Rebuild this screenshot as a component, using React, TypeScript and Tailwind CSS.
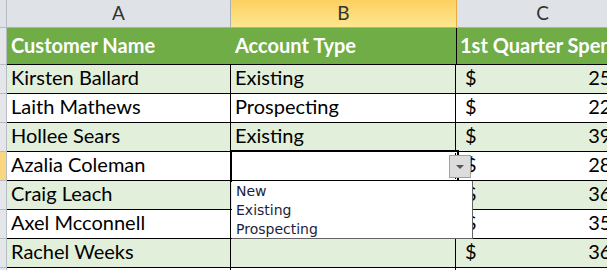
import React from 'react';

interface Row {
  name: string;
  type: string;
  spend: string;
}

const rows: Row[] = [
  { name: 'Kirsten Ballard', type: 'Existing', spend: '250' },
  { name: 'Laith Mathews', type: 'Prospecting', spend: '225' },
  { name: 'Hollee Sears', type: 'Existing', spend: '390' },
  { name: 'Azalia Coleman', type: '', spend: '285' },
  { name: 'Craig Leach', type: '', spend: '360' },
  { name: 'Axel Mcconnell', type: '', spend: '355' },
  { name: 'Rachel Weeks', type: '', spend: '365' },
  { name: '', type: '', spend: '' },
];

const font = { fontFamily: 'Lato, "Open Sans", sans-serif' };

const App: React.FC = () => {
  return (
    <div className="relative w-[607px] h-[270px] overflow-hidden bg-white text-black" style={font}>
      {/* Column headers */}
      <div className="flex h-[28px]">
        <div className="w-[7px] shrink-0 bg-[#dfe3e8] border-r border-b border-[#b7bcc4]" />
        <div className="w-[224px] shrink-0 flex items-center justify-center bg-[#dfe3e8] border-r border-b border-[#aab0b8] text-[19px] text-[#333]">A</div>
        <div className="w-[226px] shrink-0 flex items-center justify-center bg-gradient-to-b from-[#fcd05f] to-[#fde78f] border-r border-b border-[#e9a93f] text-[19px] text-[#333]">B</div>
        <div className="w-[171px] shrink-0 flex items-center justify-center bg-[#dfe3e8] border-b border-[#aab0b8] text-[19px] text-[#333]">C</div>
      </div>

      {/* Table header */}
      <div className="flex h-[36px]">
        <div className="w-[7px] shrink-0 bg-[#e4e6ea] border-r border-[#b7bcc4]" />
        <div className="w-[224px] shrink-0 flex items-end pb-[4px] pl-[4px] bg-[#70ad47] text-white font-bold text-[20px] whitespace-nowrap">Customer Name</div>
        <div className="w-[226px] shrink-0 flex items-end pb-[4px] pl-[4px] bg-[#70ad47] border-r border-black text-white font-bold text-[20px] whitespace-nowrap">Account Type</div>
        <div className="w-[171px] shrink-0 flex items-end pb-[4px] pl-[3px] bg-[#70ad47] text-white font-bold text-[20px] whitespace-nowrap overflow-hidden">1st Quarter Spend</div>
      </div>

      {/* Data rows */}
      {rows.map((r, i) => {
        const band = i % 2 === 0 && i < 7 ? 'bg-[#e2efda]' : 'bg-white';
        const active = i === 3;
        return (
          <div key={i} className="flex h-[29px]">
            <div className={`w-[7px] shrink-0 border-r border-t border-[#b7bcc4] ${active ? 'bg-[#f9d77e]' : 'bg-[#e4e6ea]'}`} />
            <div className={`w-[224px] shrink-0 flex items-end pb-[1px] pl-[4px] border-t border-black text-[20px] whitespace-nowrap ${band}`}>{r.name}</div>
            <div className={`w-[226px] shrink-0 flex items-end pb-[1px] pl-[4px] border-t border-l border-r border-black text-[20px] whitespace-nowrap ${band} -ml-px`}>{r.type}</div>
            <div className={`w-[171px] shrink-0 flex items-end justify-between pb-[1px] pl-[9px] pr-[4px] border-t border-black text-[20px] whitespace-nowrap ${band}`}>
              <span>{r.spend ? '$' : ''}</span>
              <span>{r.spend}</span>
            </div>
          </div>
        );
      })}

      {/* Active cell selection */}
      <div className="absolute left-[230px] top-[150px] w-[229px] h-[32px] border-2 border-black">
        <div className="w-full h-full border border-white" />
      </div>

      {/* Dropdown button */}
      <div className="absolute left-[449px] top-[155px] w-[22px] h-[23px] bg-[#dcdcdc] border border-[#a0a0a0] flex items-center justify-center">
        <div className="w-0 h-0 border-l-[4px] border-r-[4px] border-t-[4px] border-l-transparent border-r-transparent border-t-[#555]" />
      </div>

      {/* Dropdown list */}
      <div
        className="absolute left-[232px] top-[181px] w-[241px] h-[58px] bg-white border-r border-b border-[#646464] pl-[4px] pt-[1px] text-[14px] leading-[19px] text-[#1d1d3c]"
        style={{ fontFamily: '"DejaVu Sans", Tahoma, sans-serif' }}
      >
        <div>New</div>
        <div>Existing</div>
        <div>Prospecting</div>
      </div>
    </div>
  );
};

export default App;
